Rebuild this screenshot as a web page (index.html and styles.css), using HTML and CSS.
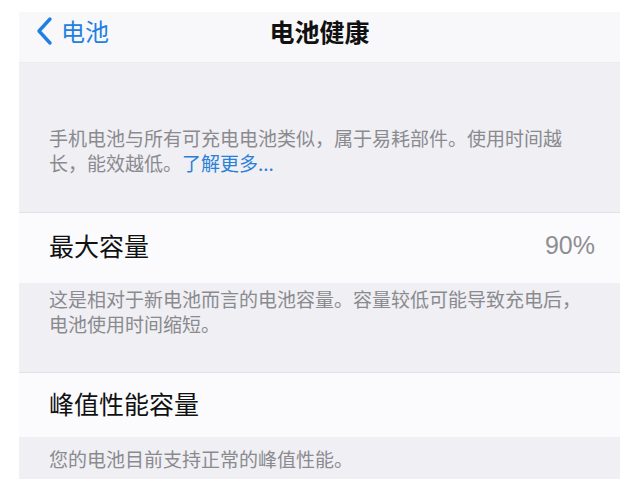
FILE: index.html
```html
<!DOCTYPE html>
<html lang="zh-CN">
<head>
<meta charset="utf-8">
<title>电池健康</title>
<link rel="stylesheet" href="styles.css">
</head>
<body>
<div class="frame">
  <header class="nav">
    <div class="back">
      <svg class="chevron" viewBox="0 0 18 30" width="18" height="30" aria-hidden="true">
        <path d="M15 3 L4 15 L15 27" fill="none" stroke="#1f80e2" stroke-width="3.4" stroke-linecap="round" stroke-linejoin="round"/>
      </svg>
      <span class="back-label">电池</span>
    </div>
    <div class="title">电池健康</div>
    <div class="spacer"></div>
  </header>

  <section class="note note-intro">
    <div class="line">手机电池与所有可充电电池类似，属于易耗部件。使用时间越</div>
    <div class="line">长，能效越低。<span class="link">了解更多...</span></div>
  </section>

  <div class="row row-max">
    <span class="row-label">最大容量</span>
    <span class="row-value">90%</span>
  </div>

  <section class="note note-max">
    <div class="line">这是相对于新电池而言的电池容量。容量较低可能导致充电后，</div>
    <div class="line">电池使用时间缩短。</div>
  </section>

  <div class="row row-peak">
    <span class="row-label">峰值性能容量</span>
  </div>

  <section class="note note-peak">
    <div class="line">您的电池目前支持正常的峰值性能。</div>
  </section>
</div>
</body>
</html>
```

FILE: styles.css
```css
html, body {
  margin: 0;
  padding: 0;
  background: #ffffff;
}

body {
  font-family: "Noto Sans CJK SC", "Noto Sans", "Liberation Sans", sans-serif;
  overflow: hidden;
}

.frame {
  margin: 12px 20px 0 19px;
  width: 601px;
}

.nav {
  height: 51px;
  padding-bottom: 12px;
  display: grid;
  grid-template-columns: 1fr auto 1fr;
  align-items: center;
  background: #f8f8fa;
  border-bottom: 1px solid #ececef;
  box-sizing: border-box;
}

.back {
  display: flex;
  align-items: center;
  gap: 8px;
  padding-left: 16px;
  color: #1f80e2;
  font-size: 24px;
  line-height: 1;
}

.chevron {
  display: block;
}

.title {
  font-size: 25px;
  font-weight: 600;
  color: #111111;
  line-height: 1;
}

.note {
  background: #efeff4;
  color: #8a8a8f;
  font-size: 19px;
  line-height: 25px;
  padding: 0 30px;
  box-sizing: border-box;
}

.line {
  height: 25px;
  white-space: nowrap;
}

.note-intro {
  height: 149px;
  padding-top: 62px;
}

.link {
  color: #2a80d8;
}

.row {
  display: flex;
  align-items: center;
  justify-content: space-between;
  background: #fbfbfd;
  border-top: 1px solid #e2e2e6;
  padding: 0 25px 6px 30px;
  box-sizing: border-box;
  color: #111111;
  font-size: 25px;
}

.row-max {
  height: 71px;
}

.row-peak {
  height: 65px;
  padding-bottom: 4px;
}

.row-value {
  color: #8e8e93;
  font-family: "Liberation Sans", "Noto Sans", sans-serif;
  font-size: 25px;
}

.note-max {
  height: 89px;
  padding-top: 3px;
}

.note-peak {
  height: 60px;
  padding-top: 9px;
}
```
